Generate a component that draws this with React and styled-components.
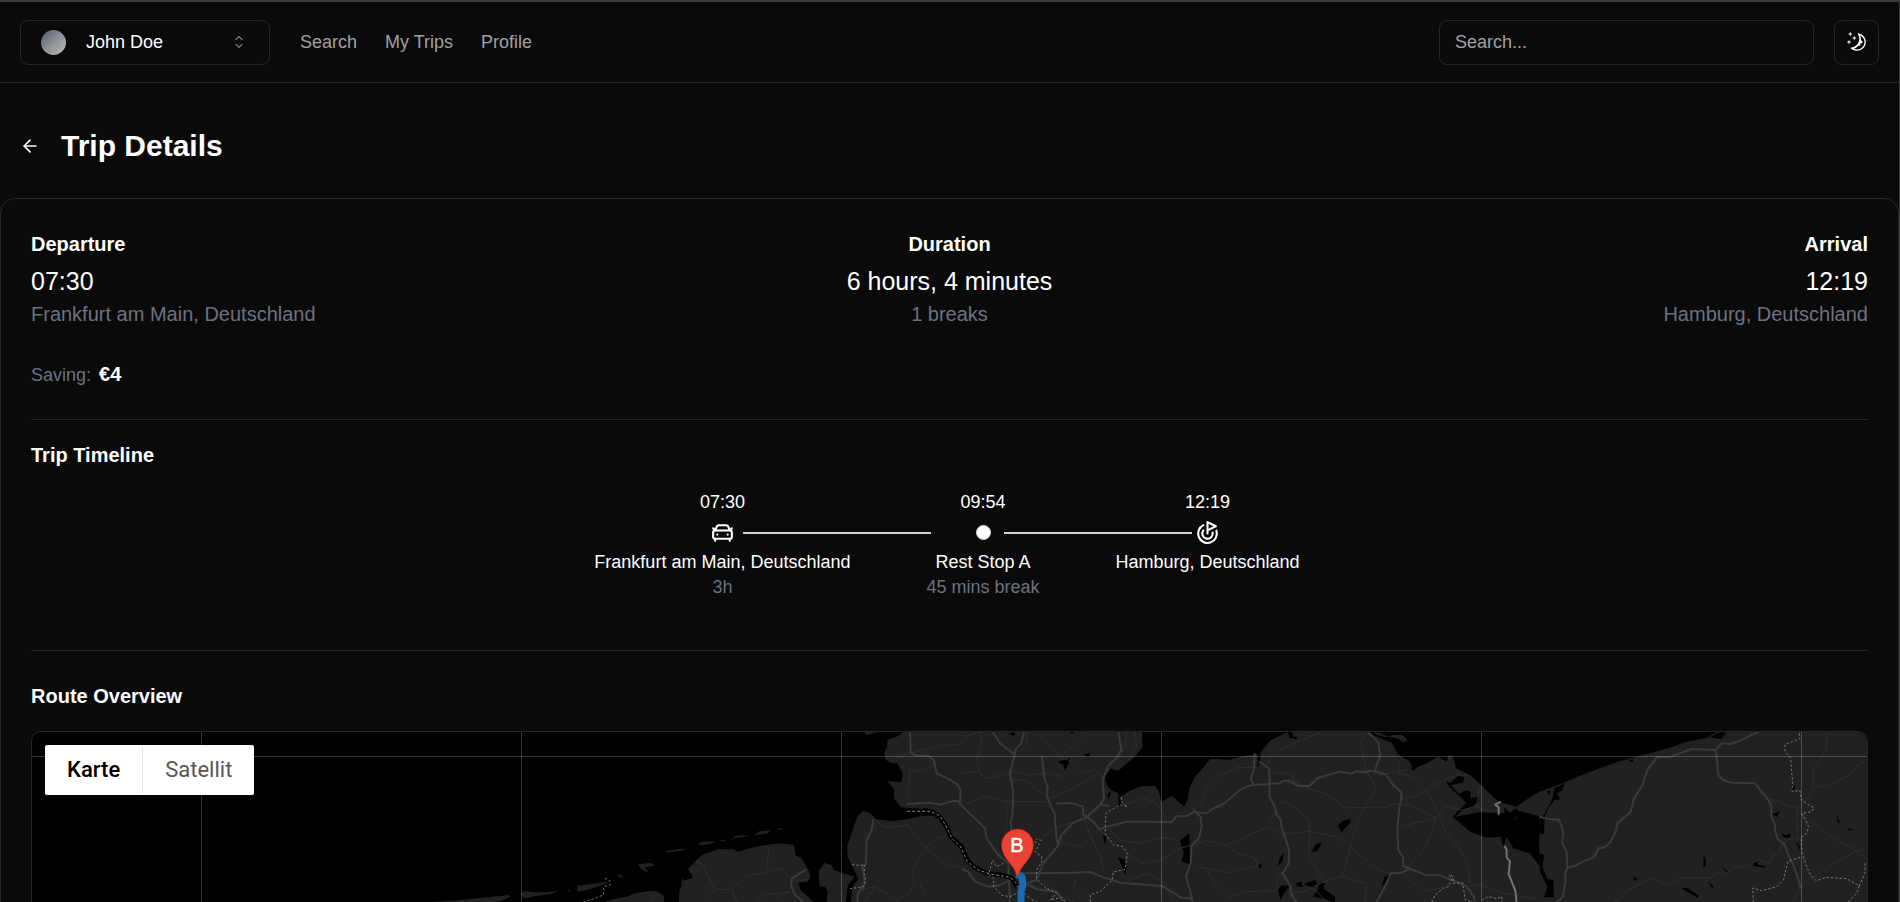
import React from 'react';
import styled, { createGlobalStyle } from 'styled-components';
import { ArrowLeft, CarFront, Goal } from 'lucide-react';
import { RxCaretSort, RxMoon } from 'react-icons/rx';

const GlobalStyle = createGlobalStyle`
  *, *::before, *::after {
    box-sizing: border-box;
  }
  html {
    scrollbar-width: none;
  }
  body {
    margin: 0;
    background: #0a0a0a;
    color: #fff;
    font-family: "Liberation Sans", Arial, sans-serif;
    font-size: 18px;
    line-height: 25px;
  }
  h1, h2, p {
    margin: 0;
  }
  button, input, select {
    font: inherit;
    color: inherit;
  }
`;

const Page = styled.div`
  border-top: 2px solid #3c3c3c;
  border-right: 1px solid #3c3c3c;
`;

const Header = styled.header`
  display: flex;
  align-items: center;
  gap: 30px;
  height: 81px;
  padding: 0 20px;
  border-bottom: 1px solid #262626;
`;

const UserSwitcher = styled.label`
  display: flex;
  align-items: center;
  gap: 20px;
  width: 250px;
  height: 45px;
  padding: 0 20px;
  border: 1px solid #262626;
  border-radius: 8px;

  svg {
    flex: none;
    opacity: .5;
  }
`;

const Avatar = styled.span`
  flex: none;
  width: 25px;
  height: 25px;
  border-radius: 50%;
  background: linear-gradient(135deg, #5f646e 10%, #8d9297 50%, #b4b3b0 90%);
`;

const UserSelect = styled.select`
  flex: 1;
  min-width: 0;
  padding: 0;
  border: 0;
  background: transparent;
  appearance: none;
`;

const Nav = styled.nav`
  display: flex;
  gap: 28px;
  flex: 1;
`;

const NavLink = styled.a`
  color: #a1a1a1;
  text-decoration: none;
`;

const Tools = styled.div`
  display: flex;
  gap: 20px;
`;

const SearchInput = styled.input`
  width: 375px;
  height: 45px;
  padding: 0 15px;
  border: 1px solid #262626;
  border-radius: 8px;
  background: transparent;

  &::placeholder {
    color: #a1a1a1;
    opacity: 1;
  }
`;

const IconButton = styled.button`
  display: flex;
  align-items: center;
  justify-content: center;
  width: 45px;
  height: 45px;
  padding: 0;
  border: 1px solid ${props => (props.$outline ? '#262626' : 'transparent')};
  border-radius: 8px;
  background: transparent;
`;

const TitleBar = styled.div`
  display: flex;
  align-items: center;
  gap: 9px;
  padding: 40px 7px 30px;
`;

const Title = styled.h1`
  font-size: 30px;
  line-height: 40px;
  font-weight: 700;
`;

const Card = styled.main`
  padding: 30px;
  border: 1px solid #262626;
  border-radius: 15px;
`;

const Summary = styled.div`
  display: grid;
  grid-template-columns: repeat(3, 1fr);
  margin-bottom: 30px;
`;

const SummaryItem = styled.div`
  text-align: ${props => props.$align || 'left'};
`;

const Heading = styled.h2`
  font-size: 20px;
  line-height: 30px;
  font-weight: 700;
`;

const BigText = styled.p`
  margin-top: 5px;
  font-size: 25px;
  line-height: 35px;
`;

const Muted = styled.p`
  color: #6b7280;
  font-size: ${props => (props.$large ? '20px' : '18px')};
  line-height: ${props => (props.$large ? '30px' : '25px')};
`;

const Saving = styled.div`
  display: flex;
  align-items: baseline;
  gap: 8px;
  line-height: 30px;

  strong {
    font-size: 20px;
  }
`;

const Section = styled.section`
  margin-top: 30px;
  padding-top: ${props => props.$space}px;
  border-top: 1px solid #262626;
`;

const Timeline = styled.div`
  display: flex;
  justify-content: center;
  gap: 76px;
  padding: 20px 5px 20px 0;
`;

const Stop = styled.div`
  display: flex;
  flex-direction: column;
  align-items: center;
`;

/* The connector runs out of the marker towards the next stop. */
const Marker = styled.div`
  display: flex;
  align-items: center;
  gap: 8px;
  width: 25px;
  height: 25px;
  margin: 5px 0;

  svg {
    flex: none;
  }
`;

const Dot = styled.span`
  flex: none;
  width: 15px;
  height: 15px;
  margin: 0 5px;
  border: 1px solid #d1d5db;
  border-radius: 50%;
  background: #fff;
`;

const Connector = styled.span`
  flex: none;
  width: 188px;
  height: 2px;
  background: #d1d5db;
`;

const MapFrame = styled.div`
  position: relative;
  height: 500px;
  margin-top: 20px;
  overflow: hidden;
  border: 1px solid #262626;
  border-radius: 10px;
  background: #000;
`;

const MapCanvas = styled.svg`
  display: block;
  width: 100%;
  height: 100%;
`;

const MapTypes = styled.div`
  position: absolute;
  top: 13px;
  left: 13px;
  display: flex;
  align-items: center;
  height: 50px;
  border-radius: 2px;
  background: #fff;
`;

const MapType = styled.button`
  height: 46px;
  padding: 0 22px 2px;
  border: 0;
  background: transparent;
  color: ${props => (props.$active ? '#000' : '#565656')};
  font-family: Roboto, sans-serif;
  font-size: 22px;
  font-weight: ${props => (props.$active ? 500 : 400)};

  & + & {
    border-left: 1px solid #e6e6e6;
  }
`;

const stops = [
  { time: '07:30', name: 'Frankfurt am Main, Deutschland', note: '3h', icon: <CarFront size={25} /> },
  { time: '09:54', name: 'Rest Stop A', note: '45 mins break', icon: <Dot /> },
  { time: '12:19', name: 'Hamburg, Deutschland', icon: <Goal size={25} /> },
];

/* Map tiles, from west to east. Each is drawn on a grid three times finer than the canvas. */
const tiles = [
  {
    x: 448,
    land: [
      '-240,556 -150,546 -60,540 35,530 60,528 85,525 92,530 70,540 40,548 0,556',
      '125,518 140,513 155,516 200,517 235,513 215,522 180,526 150,532 135,535 125,528',
      '262,512 270,507 268,515',
      '292,497 330,493 370,487 390,485 360,497 320,510 292,516',
      '412,466 420,463 432,473 418,472',
      '474,433 500,430 516,429 522,437 495,442 506,460 485,448',
      '556,394 600,387 622,386 600,393 560,398',
      '654,371 670,365 706,364 690,373 660,375',
      '720,362 732,358 738,365',
      '752,362 766,348 806,346 790,351 762,354 756,362',
      '824,344 838,334 872,330 866,338 830,346',
      '890,327 900,324 912,330',
      '370,546 400,538 440,530 465,520 505,513 530,514 552,528 552,1600 370,1600',
      '597,546 598,510 604,500 607,473 612,482 640,473 624,447 655,415 670,403 715,388 760,388 775,395 800,388 830,380 895,370 942,374 947,405 965,415 985,450 992,467 985,484 955,488 962,510 985,530 1000,546 1000,1600 597,1600',
      '1017,478 1017,452 1033,428 1055,436 1062,450 1090,460 1125,470 1105,500 1098,546 1040,546 1043,515 1035,500 1020,500',
      '1152,36 1160,46 1180,40 1200,36',
    ],
    water: [],
    minor: [
      '648,424 672,436 678,456 704,508 756,508 800,468 905,445 930,470',
      '704,508 684,540', '756,508 770,546', '866,384 862,446',
      '830,546 855,522 885,522 930,516', '885,522 910,546', '930,485 985,478',
      '510,546 530,524 545,530',
    ],
    major: ['980,448 935,475 934,500 945,524 970,546'],
    dashed: ['310,546 345,535 370,525 372,500 391,494 390,483 372,473'],
  },
  {
    x: 828,
    land: [
      '130,36 115,48 82,60 82,80 72,100 78,120 95,130 112,130 128,160 124,186 82,184 102,208 102,235 122,262 200,268 225,288 185,288 140,298 95,303 50,298 30,280 10,272 -8,290 -25,340 -39,380 -37,410 -28,430 -8,470 -25,490 -33,520 -35,1600 1084,1600 1084,118 1050,118 1030,150 1020,180 1010,200 985,235 975,262 935,228 905,245 895,212 885,198 845,198 810,212 780,232 775,220 752,210 740,195 735,170 752,146 775,152 825,110 848,80 846,36',
    ],
    water: [
      '592,126 630,114 626,130 614,152 610,134',
      '445,42 464,36 464,48', '672,104 690,98 688,112', '628,37 644,36 636,41',
      '742,222 754,214 746,240', '775,222 785,250 800,262 775,258',
      '962,362 988,340 990,434 964,424 972,400 962,386',
      '774,412 794,418 800,440 796,466 786,440', '728,346 738,350 736,376',
      '948,208 970,190 985,196 975,225 955,230', '1003,155 1025,140 1030,155 1010,168',
    ],
    minor: [
      '0,510 45,500 105,537 140,528 165,490 155,455 195,385 160,340 145,315 100,320 70,322 45,298',
      '195,385 235,352 260,350', '195,385 270,440 320,440', '45,500 15,546', '180,490 195,530',
      '95,118 150,100 185,92 240,76 300,74 315,50 360,36', '360,36 365,75 350,120 358,155 375,175 450,160',
      '142,234 150,150 172,154 220,136', '358,155 300,160', '142,234 160,260',
      '450,162 465,155 500,165 560,160 610,170', '455,180 500,182 530,210 575,235 650,200 705,165',
      '464,104 500,76 500,36', '530,40 560,70 600,112 650,70 680,36', '600,112 640,125 665,160 705,150 730,175',
      '320,252 370,228 440,245 570,245', '440,235 440,330', '550,350 590,320 640,308',
      '600,365 660,380 700,350', '675,296 690,345 720,410 735,460', '740,320 780,360 840,370 905,352 950,360',
      '800,400 850,430 905,420 960,384', '790,490 860,460 905,480 940,540', '660,455 640,500 690,546',
      '800,36 795,80 750,140', '825,36 830,80 810,110', '780,260 850,235 890,250 920,300', '1000,270 1045,232 1080,200',
      '960,384 1010,372 1080,360', '990,434 1080,448', '540,470 590,520 640,546',
    ],
    major: [
      '150,36 152,96 165,106 208,108 222,122 230,160 268,178 288,190 302,210 300,252 375,325 380,355 415,405 445,430 450,546',
      '398,36 420,70 464,104', '492,36 484,70 468,86 464,104 450,160 460,215 458,280 452,305 456,350',
      '546,106 552,170 564,205 560,225 574,262 584,280 590,360 596,372',
      '776,36 784,90 770,115 746,135 728,180 732,235 720,255 680,292 640,308 604,346 592,380 550,430 528,480 500,490',
      '590,250 640,250 668,260 670,284 700,305 718,328 740,320 800,305 860,305 935,306 950,288 980,287 1000,272 1080,255',
      '480,460 640,458 690,456 740,475 780,488 905,498 960,530 1080,537',
      '305,446 325,456 345,485 385,500 420,496 450,480', '500,490 530,508 590,515 610,546',
      '40,298 35,330 20,360 18,430 8,440 14,490 -6,520 -8,546',
      '1000,270 1022,290 1025,320 1018,352 995,378 992,430 978,470 990,510 998,546',
      '140,252 210,248 240,254 285,242 302,246', '720,255 748,258',
    ],
    dashed: [
      '430,430 410,440 398,420 386,462 402,476 400,498 425,526 450,530 470,520',
      '545,362 532,356 524,365 538,372 526,396 545,410 546,425 530,450 530,478 560,505 590,520 570,540 605,532 618,546',
      '784,232 788,252 802,260 780,254 738,280 735,340 760,374 788,380 802,400 795,448 760,456 756,482 720,515 690,525 692,546',
      '-24,434 0,436 15,434 12,460 17,480 12,500 -30,506',
    ],
    rivers: ['190,270 218,276 240,292 258,318 272,350 305,380 322,420 345,442 380,460 430,466 456,474 470,500', '-10,472 -30,500 -34,546'],
    channel: ['142,274 212,274 240,288 258,318 276,355 302,380 322,425 355,450 390,462 450,472 466,486 480,510 510,535 530,546'],
  },
  {
    x: 1148,
    land: [
      '-2,300 -2,262 12,262 24,235 28,206 45,170 68,145 90,118 150,120 190,108 238,102 270,62 322,36 565,36 590,50 635,68 655,104 690,125 700,150 715,140 740,130 775,110 800,125 806,106 818,108 828,145 870,165 900,192 955,245 1010,260 1050,232 1084,213 1084,1600 -2,1600',
      '580,36 600,38 625,50 640,44 665,44 684,60 670,68 655,56 635,52 610,50 590,44',
    ],
    water: [
      '322,36 330,54 352,58 350,50 340,50 336,36', '234,102 242,102 238,142 230,136',
      '798,182 810,190 835,168 854,172 848,188 812,196 838,222 858,210 872,215 872,235 894,230 896,245 876,262 850,268 826,290 900,277 975,280 990,306 1012,294 1012,272 1084,290 1084,446 1050,400 1000,385 985,360 980,350 970,380 962,350 920,353 870,335 818,290 858,250 848,236 806,198',
      '474,316 490,302 512,296 508,312 484,336', '395,396 408,372 426,368 412,394', '300,412 312,400 308,424 292,440',
      '348,490 365,484 368,500 352,500', '372,492 405,480 412,492 398,504', '420,485 436,490 430,505 465,530 465,548 430,536 400,530 412,510',
      '294,510 305,496 328,498 312,520 302,540', '604,500 614,470 628,464 620,486', '0,362 28,340 30,434 4,424 12,400',
      '235,432 248,435 240,446', '690,140 708,150 698,152', '972,262 990,278 1008,264 1020,280 990,310 975,285',
    ],
    minor: [
      '40,270 62,248 80,205 115,170 170,143 220,142', '238,140 225,100', '265,134 268,110 300,90 340,70 420,38',
      '268,158 335,160 340,182 385,205 440,222 495,264 570,262 625,262 635,252 690,256',
      '560,40 542,70 558,150 590,206 555,260 528,320 512,380 486,470 430,486 385,405 390,340',
      '300,250 310,243 350,268 385,296 390,334 300,342 265,320 140,375 80,362 0,385',
      '390,334 470,350 512,380 545,410 580,440 625,460', '265,320 285,272', '140,375 170,400 225,412 232,438 140,458 50,440',
      '80,450 110,495 150,532 200,515 290,512', '330,520 370,515 430,486', '486,470 560,490 555,546', '390,500 410,515 440,546',
      '600,70 660,130 655,160 700,170 740,210 770,270 800,340 835,380 865,440 872,500 905,492 960,518 1080,540',
      '668,238 720,225 770,190 830,165 860,165', '668,240 700,260 770,295 660,320', '770,295 735,385 680,445', '770,290 795,260 850,270 890,258 900,200',
      '670,460 730,515 800,500', '680,150 600,165', '330,430 290,480 290,512', '890,262 940,275',
    ],
    major: [
      '-2,290 20,288 40,277 80,280 100,265 130,252 185,206 215,195 298,190 312,182 325,182 355,198 388,198 412,175 450,163 480,155 515,161 530,154 552,157 572,152 600,158 618,164 640,195 664,216 664,238 658,260 652,330 655,390 668,410 670,438 735,464 780,466 830,486 860,500 882,530 884,546',
      '238,124 268,146 268,230 285,262 290,285 302,300 304,320 326,385 328,428 308,460 332,500 332,520 350,546',
      '565,38 595,68 600,108 584,155', '40,270 62,290 65,320 58,352 35,378 32,430 18,470 30,510 38,546', '-2,532 38,536',
      '224,100 222,150 212,175 220,192', '690,446 665,458 632,460 615,500 590,546',
    ],
    pale: ['962,245 946,254 956,262 956,284', '974,378 980,390 980,412 990,424 986,462 1006,512 1010,546'],
    dashed: ['755,546 765,525 790,505 805,500 815,480 808,464 820,470 820,490 848,488 856,540 880,546', '905,540 925,530 950,536 965,530 966,546'],
  },
  {
    x: 1508,
    land: ['-2,216 70,188 150,155 240,123 335,98 385,85 440,65 500,54 530,36 990,36 990,1600 -2,1600'],
    water: [
      '510,52 540,36 558,38 550,48 545,58', '265,122 280,116 278,126', '44,205 75,188 66,212 50,220 62,238 44,240 26,262 14,290 12,342 -2,342 -2,296 14,282 36,238',
      '-2,400 12,405 8,440 22,476 40,480 42,530 12,532 22,500 0,455', '698,282 720,274 710,292', '726,340 738,346 750,340 752,352 732,354',
      '640,428 652,424 654,434 676,438 672,443 640,438', '424,505 440,503 474,525 474,534', '490,412 496,410 498,438 490,440',
      '545,440 562,452 562,460', '505,484 520,498 518,508', '280,468 292,478 284,484', '890,286 900,308 894,308', '918,330 930,325 942,331', '768,365 778,375 782,396', '754,196 766,200 758,214', '20,214 32,212 28,226',
    ],
    minor: [
      '225,546 262,512 332,475 385,497 420,474 510,474 535,460 560,460 582,442 620,440 655,418 690,430 700,405 718,400 726,370 750,358 780,354',
      '690,234 750,260 775,262 800,238 822,202 880,194 900,178 925,168 950,138 990,114', '820,200 820,148 858,92 862,60 855,38',
      '770,262 772,350', '775,275 800,300 845,325 865,346 950,392 990,425', '990,385 950,392 880,432 830,466 800,480 780,510 755,546',
      '690,234 700,248',
    ],
    major: [
      '655,38 635,44 615,56 575,72 545,70 528,90 455,87 425,98 385,112 352,110 322,150 308,195 282,235 272,276 232,310 228,332 212,365 195,382 175,385 162,412 130,424 105,438 85,442 76,455 76,490 68,530 50,546',
      '528,90 535,165 550,180 575,188 645,190 685,240 694,258 694,290 706,315 704,330 714,358 735,376 745,405 762,440 776,480 782,505',
      '-2,290 20,296 58,300 70,335 66,370 80,395 82,442',
    ],
    dashed: [
      '778,40 780,56 735,74 735,94 752,115 756,165 758,190 756,214 780,212 784,240 822,264 815,275 786,280 806,320 800,340 784,352 786,395 800,440 812,466 828,482 860,472 920,476 958,498 975,460 975,430 990,425',
      '640,546 638,504 665,512 710,500 730,480 744,424 786,410', '958,498 950,520 925,546',
    ],
  },
];

function Lines({ of = [], ...rest }) {
  return (
    <g fill="none" strokeLinejoin="round" {...rest}>
      {of.map(points => <polyline key={points} points={points} />)}
    </g>
  );
}

function Shapes({ of, fill }) {
  return (
    <g fill={fill}>
      {of.map(points => <polygon key={points} points={points} />)}
    </g>
  );
}

function RouteMap() {
  return (
    <MapCanvas viewBox="0 0 1835 498" preserveAspectRatio="xMinYMin slice" role="img" aria-label="Route">
      {tiles.map(tile => (
        <g key={tile.x} transform={`translate(${tile.x} -12) scale(.3333)`}>
          <Shapes of={tile.land} fill="#212121" />
          <Shapes of={tile.water} fill="#000" />
          <Lines of={tile.minor} stroke="#2e2e2e" strokeWidth="3" />
          <Lines of={tile.major} stroke="#3a3a3a" strokeWidth="6" />
          <Lines of={tile.pale} stroke="#6f757e" strokeWidth="6" />
          <Lines of={tile.rivers} stroke="#000" strokeWidth="14" />
          <Lines of={tile.dashed} stroke="#777" strokeWidth="3" strokeDasharray="7 6" />
          <Lines of={tile.channel} stroke="#8c8c8c" strokeWidth="3" strokeDasharray="8 7" />
        </g>
      ))}
      <g stroke="#fff" strokeOpacity=".2">
        {[169, 489, 809, 1129, 1449, 1769].map(x => (
          <line key={x} x1={x + 0.5} x2={x + 0.5} y1="0" y2="500" />
        ))}
        <line x1="0" x2="1835" y1="24.5" y2="24.5" />
      </g>
      <path d="M985 142 990 145 991 153 989 160 990 498" fill="none" stroke="#1b6ab4" strokeWidth="7" strokeLinejoin="round" />
      <path
        d="M985.500 143.500c-1.500 0-1.800-2-2.500-4.500-2-6-13.500-13.500-13.500-26a16 16 0 0 1 32 0c0 12.500-11.500 20-13.500 26-.700 2.500-1 4.500-2.500 4.500z"
        fill="#ea4335"
        stroke="#b31412"
        strokeWidth=".6"
      />
      <text x="985" y="120" fill="#fff" stroke="#fff" strokeWidth=".5" fontSize="20" textAnchor="middle">B</text>
    </MapCanvas>
  );
}

export default function App() {
  return (
    <Page>
      <GlobalStyle />
      <Header>
        <UserSwitcher>
          <Avatar />
          <UserSelect aria-label="Account">
            <option>John Doe</option>
          </UserSelect>
          <RxCaretSort size={20} />
        </UserSwitcher>
        <Nav>
          <NavLink href="#search">Search</NavLink>
          <NavLink href="#trips">My Trips</NavLink>
          <NavLink href="#profile">Profile</NavLink>
        </Nav>
        <Tools>
          <SearchInput type="search" placeholder="Search..." aria-label="Search" />
          <IconButton $outline aria-label="Toggle theme">
            <RxMoon size={20} />
          </IconButton>
        </Tools>
      </Header>

      <TitleBar>
        <IconButton aria-label="Back">
          <ArrowLeft size={20} />
        </IconButton>
        <Title>Trip Details</Title>
      </TitleBar>

      <Card>
        <Summary>
          <SummaryItem>
            <Heading>Departure</Heading>
            <BigText>07:30</BigText>
            <Muted $large>Frankfurt am Main, Deutschland</Muted>
          </SummaryItem>
          <SummaryItem $align="center">
            <Heading>Duration</Heading>
            <BigText>6 hours, 4 minutes</BigText>
            <Muted $large>1 breaks</Muted>
          </SummaryItem>
          <SummaryItem $align="right">
            <Heading>Arrival</Heading>
            <BigText>12:19</BigText>
            <Muted $large>Hamburg, Deutschland</Muted>
          </SummaryItem>
        </Summary>

        <Saving>
          <Muted as="span">Saving:</Muted>
          <strong>€4</strong>
        </Saving>

        <Section $space={20}>
          <Heading>Trip Timeline</Heading>
          <Timeline>
            {stops.map((stop, i) => (
              <Stop key={stop.name}>
                <span>{stop.time}</span>
                <Marker>
                  {stop.icon}
                  {i < stops.length - 1 && <Connector />}
                </Marker>
                <span>{stop.name}</span>
                {stop.note && <Muted>{stop.note}</Muted>}
              </Stop>
            ))}
          </Timeline>
        </Section>

        <Section $space={30}>
          <Heading>Route Overview</Heading>
          <MapFrame>
            <RouteMap />
            <MapTypes>
              <MapType $active>Karte</MapType>
              <MapType>Satellit</MapType>
            </MapTypes>
          </MapFrame>
        </Section>
      </Card>
    </Page>
  );
}
